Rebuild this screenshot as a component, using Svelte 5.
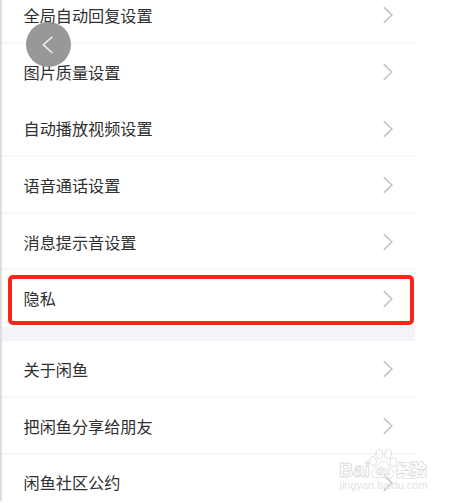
<script>
const groups = [
  [
    { label: '全局自动回复设置', divider: true },
    { label: '图片质量设置', divider: false },
    { label: '自动播放视频设置', divider: true },
    { label: '语音通话设置', divider: true },
    { label: '消息提示音设置', divider: true },
    { label: '隐私', active: true },
  ],
  [
    { label: '关于闲鱼', divider: true },
    { label: '把闲鱼分享给朋友', divider: true },
    { label: '闲鱼社区公约' },
  ],
];
</script>

<div class="screen">
  <main class="panel">
    {#each groups as group}
      <section>
        {#each group as item}
          <div class="row" class:divider={item.divider} class:active={item.active}>
            <span>{item.label}</span>
            <svg class="chevron" width="10" height="18" viewBox="0 0 10 18">
              <path d="M.8 1.2 8.8 9 .8 16.8" />
            </svg>
          </div>
        {/each}
      </section>
    {/each}
  </main>

  <button class="back" aria-label="返回">
    <svg width="45" height="45" viewBox="0 0 45 45">
      <path d="M26.5 14.7 17.3 22.7l9.2 8.3" />
    </svg>
  </button>

  <svg class="watermark" width="96" height="48" viewBox="0 0 96 48">
    <text class="brand" x="3" y="30" textLength="31" lengthAdjust="spacingAndGlyphs">Bai</text>
    <g class="paw">
      <ellipse cx="37" cy="14" rx="3.2" ry="4.5" transform="rotate(-12 37 14)" />
      <ellipse cx="43.2" cy="7.2" rx="3.4" ry="4.7" />
      <ellipse cx="52.2" cy="7.2" rx="3.4" ry="4.7" transform="rotate(10 52.2 7.2)" />
      <ellipse cx="57.5" cy="15" rx="3.2" ry="4.5" transform="rotate(12 57.5 15)" />
      <path d="M47.5 14c-4 0-5 3.5-7.5 6-3 2.5-5.5 4.5-4.500 7.5 1 4 5 3.500 7.500 3.200 2.500-.4 5-.4 7.500 0 3 .5 6.500.5 7.500-3 1-3.500-1.500-5.200-4-7.700-2.500-2.500-3-6-6.500-6z" />
    </g>
    <text class="du" x="40" y="28" textLength="14" lengthAdjust="spacingAndGlyphs">du</text>
    <text class="name" x="60.5" y="29" textLength="30" lengthAdjust="spacingAndGlyphs">经验</text>
    <text class="site" x="3.5" y="42" textLength="88" lengthAdjust="spacingAndGlyphs">jingyan.baidu.com</text>
  </svg>
</div>

<style>
:global(body) {
  margin: 0;
  background: #fff;
}

.screen {
  position: relative;
  display: flex;
  align-items: flex-start;
  width: 456px;
  height: 503px;
  overflow: hidden;
  background: #fff;
  font-family: "Noto Sans CJK SC", sans-serif;
}

.panel {
  box-sizing: border-box;
  width: 415px;
  height: 514px;
  margin-top: -13px;
  border-left: 2px solid #dedee0;
  overflow: hidden;
}

section + section {
  border-top: 14px solid #f3f3f8;
}

.row {
  position: relative;
  box-sizing: border-box;
  display: flex;
  align-items: center;
  justify-content: space-between;
  height: 56.7px;
  padding: 1px 22px 0 21.5px;
  border-bottom: 2px solid transparent;
  color: #303030;
  font-size: 16.15px;
  line-height: 24px;
}

.row.divider {
  border-bottom-color: #f7f7f7;
}

/* red frame sits inside the row, clear of its neighbours */
.row.active::after {
  content: '';
  position: absolute;
  inset: 4.5px 1px 0 6px;
  border: 4px solid #fb2416;
  border-radius: 5px;
}

.chevron {
  margin-top: 1px;
  fill: none;
  stroke: #c6c6c6;
  stroke-width: 1.7;
}

.back {
  position: absolute;
  top: 22px;
  left: 26px;
  width: 45px;
  height: 45px;
  padding: 0;
  border: 0;
  border-radius: 50%;
  background: rgba(146, 146, 146, .94);
}

.back svg {
  display: block;
  fill: none;
  stroke: #f4f4f4;
  stroke-width: 1.5;
}

.watermark {
  position: absolute;
  left: 336px;
  top: 447px;
  fill: rgba(255, 255, 255, .4);
  stroke: #dcdcdc;
  stroke-width: .9;
}

.watermark text {
  font-family: "Liberation Sans", "Noto Sans CJK SC", sans-serif;
  font-weight: bold;
}

.brand {
  font-size: 20px;
}

.watermark .du {
  font-size: 13px;
  stroke-width: .7;
}

.watermark .name {
  font-size: 16px;
  fill: #fff;
  stroke-width: 1.6;
  paint-order: stroke;
}

.watermark .site {
  font-size: 10px;
  font-weight: normal;
  fill: #e2e2e2;
  stroke: none;
}
</style>
